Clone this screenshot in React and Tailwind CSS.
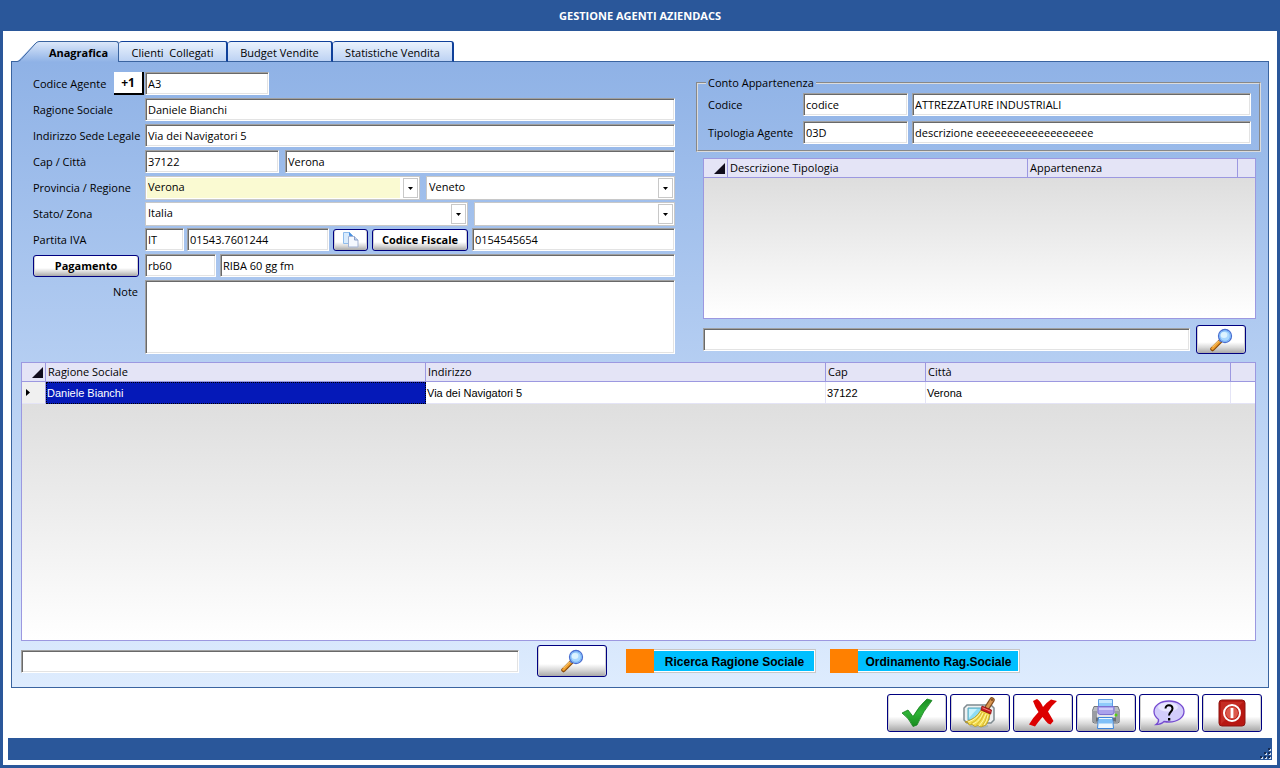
import { useState } from 'react';

function TextField({ className = '', ...props }) {
  return (
    <input
      type="text"
      className={`h-[23px] min-w-0 border border-t-[#a0a0a0] border-l-[#a0a0a0] border-r-white border-b-white bg-white px-0.5 shadow-[inset_1px_1px_0_#696969,inset_-1px_-1px_0_#e3e3e3] outline-none ${className}`}
      {...props}
    />
  );
}

function Combo({ className = '', tone = 'bg-white', options, ...props }) {
  return (
    <div className={`relative flex h-6 min-w-0 border border-[#c8c8c8] bg-white p-px ${className}`}>
      <select className={`mr-[18px] min-w-0 flex-1 appearance-none pb-0.5 pl-px leading-4 outline-none ${tone}`} {...props}>
        {options.map((o) => (
          <option key={o}>{o}</option>
        ))}
      </select>
      <span className="pointer-events-none absolute top-px right-px flex h-5 w-[15px] items-center justify-center border border-[#c8c8c8] bg-white">
        <svg width="5" height="3" viewBox="0 0 5 3" aria-hidden="true">
          <path d="M0 0h5L2.5 3z" fill="#000" />
        </svg>
      </span>
    </div>
  );
}

function PushButton({ className = '', children, ...props }) {
  return (
    <button
      type="button"
      className={`flex shrink-0 cursor-pointer items-center justify-center rounded-[3px] border border-[#000080] bg-linear-to-b from-white from-60% via-[#d8d8d8] via-80% to-[#a8a8a8] font-bold shadow-[inset_1px_0_0_#d0d0d0,inset_-1px_0_0_#d0d0d0] ${className}`}
      {...props}
    >
      {children}
    </button>
  );
}

function ToggleBar({ label }) {
  const [on, setOn] = useState(false);

  return (
    <button type="button" aria-pressed={on} onClick={() => setOn(!on)} className="flex h-6 w-[190px] cursor-pointer">
      <span className="h-full w-7 bg-[#ff8000]"></span>
      <span className="flex h-full flex-1 items-center justify-center border border-l-0 border-[#c8c8c8] bg-[#00bfff] pt-0.5 font-['Liberation_Sans',Arial,sans-serif] text-[12px] font-bold shadow-[inset_0_1px_0_#fff,inset_-1px_-1px_0_#fff]">
        {label}
      </span>
    </button>
  );
}

function MagnifierIcon() {
  return (
    <svg width="24" height="24" viewBox="0 0 24 24" aria-hidden="true">
      <path d="M11 13.500 3.500 21" stroke="#8a4b08" strokeWidth="4.500" strokeLinecap="round" />
      <path d="M10.500 13.500 3.500 20.500" stroke="#f0a030" strokeWidth="2.800" strokeLinecap="round" />
      <path d="M9.500 13 3.500 19" stroke="#ffdc90" strokeWidth="1" />
      <path d="m10.500 13.500 2.500-2.500" stroke="#7888b0" strokeWidth="2.500" />
      <circle cx="16" cy="8" r="6.5" fill="#a9d8ff" stroke="#4a6ed0" strokeWidth="1.300" />
      <circle cx="16" cy="8" r="5.3" fill="none" stroke="#78b4f8" />
      <ellipse cx="15" cy="7" rx="3.4" ry="3" fill="#dcf3ff" />
    </svg>
  );
}

function CopyIcon() {
  return (
    <svg width="17" height="17" viewBox="0 0 17 17" aria-hidden="true">
      <path d="M1.500 1.500h6l3 3v8h-9z" fill="#d8ebfd" stroke="#8fbcec" />
      <path d="M7.500 1.500v3h3" fill="#4b91e0" stroke="#4b91e0" />
      <path d="M6.500 5.500h6l3.500 3.500v7h-9.500z" fill="#f4f8fe" stroke="#a3b3d4" />
      <path d="M12.500 5.500v3.500h3.500" fill="#c0d4f0" stroke="#8b9fc8" />
    </svg>
  );
}

function CheckIcon() {
  return (
    <svg width="32" height="30" viewBox="0 0 32 30" aria-hidden="true">
      <defs>
        <linearGradient id="check" x1="0" y1="0" x2="0" y2="1">
          <stop offset="0" stopColor="#1c8f24" />
          <stop offset="0.5" stopColor="#2fb336" />
          <stop offset="1" stopColor="#178a1e" />
        </linearGradient>
      </defs>
      <path d="m1 15 6-3 5 6.500Q18 8 26 1l5 1.500Q22 13 16 27l-4 1.500Q8 20 1 15z" fill="url(#check)" stroke="#13801a" strokeWidth=".8" />
    </svg>
  );
}

function BroomIcon() {
  return (
    <svg width="34" height="32" viewBox="0 0 34 32" aria-hidden="true">
      <path d="M4 8h24l3 3v12l-3 3H4l-3-3V11z" fill="#eef1f2" stroke="#7e8a90" strokeWidth="1.500" />
      <path d="M5 11h21v12H5z" fill="#8edcf4" stroke="#58a4b8" />
      <path d="m6 21 8-9H6z" fill="#c8f2fc" />
      <path d="M7 29q9 2.500 18 0" fill="none" stroke="#a9b4b8" strokeWidth="2" />
      <path d="m24.500 10 4.500-7" stroke="#855022" strokeWidth="5.500" strokeLinecap="round" />
      <path d="m24.500 10 4.500-7" stroke="#d99650" strokeWidth="3.200" strokeLinecap="round" />
      <circle cx="29" cy="2.800" r="1.200" fill="#8a5424" />
      <path d="m18 13 9 4q-1 7-4 11l-5 2-3-1.500-3 1-3-2-3 .5-1-2.500-3-.5Q13 22 18 13z" fill="#f3dc48" stroke="#b5921c" strokeWidth=".8" />
      <path d="M18 15q-4 7-13 10M20 16q-3 8-10 11M23 17q-3 8-7 12M25 18q-1 6-4 10" fill="none" stroke="#fff6ac" />
      <path d="M19 15q-4 8-11 11.500M21.500 16q-3 8-8 12M24 18q-1 6-5 11" fill="none" stroke="#c9a62a" strokeWidth=".7" />
      <path d="m19 9 9.500 4-.8 4L18 13z" fill="#c81c1c" stroke="#8d1010" strokeWidth=".8" />
      <path d="m19.500 10.800 8 3.400" stroke="#f08080" />
    </svg>
  );
}

function CrossIcon() {
  return (
    <svg width="30" height="30" viewBox="0 0 30 30" aria-hidden="true">
      <path d="m5 3 4-2q3.500 2 6 8 3.500-4.500 8-7.500l6 1.500q-5.500 4.500-9 10.500l5.500 9.500-3 3.500-2.500-1q-2.500-2.500-5.500-6.500-4 4.500-7.500 9.500L1 26.500q4-7 9.500-12.500Q7 9 5 3z" fill="#dc0000" />
    </svg>
  );
}

function PrinterIcon() {
  return (
    <svg width="30" height="32" viewBox="0 0 30 32" aria-hidden="true">
      <path d="M3 9.500h24l1.500 4V25l-2 1h-23l-2-1V13.500z" fill="#b9bcc0" stroke="#75787c" />
      <path d="M1 14h5v11H1zM24 14h5v11h-5z" fill="#9a9da2" />
      <path d="M6 16h18v6H6z" fill="#e3e5e8" />
      <path d="M7.500 2.500h14v9h-14z" fill="#c6e6ff" stroke="#5b9be4" />
      <path d="M8 6h13v3H8z" fill="#8fcbfb" />
      <path d="M7 9.500h16v7l-2 1H9l-2-1z" fill="#aaa2ec" stroke="#7c70d0" />
      <path d="M8 12h14" stroke="#dcd8ff" strokeWidth="1.500" />
      <path d="M5 20.500h20v4H5z" fill="#6b6e73" />
      <path d="M7.500 20.500h14l1 11h-16z" fill="#eef8ff" stroke="#3f86dc" />
      <path d="M8 22h13l.5 4.500h-14z" fill="#7fc0f8" />
      <circle cx="25" cy="18" r="1.500" fill="#54d010" />
    </svg>
  );
}

function HelpIcon() {
  return (
    <svg width="32" height="28" viewBox="0 0 32 28" aria-hidden="true">
      <path d="M16 2c8.500 0 15 4.500 15 10.500S24.500 23 16 23q-3 0-5-.5-3 3-8 3 3-2 2.500-5Q1 17 1 12.500C1 6.500 7.500 2 16 2z" fill="#d2ccfb" stroke="#754bd0" strokeWidth="1.300" />
      <ellipse cx="15" cy="8" rx="10" ry="4.500" fill="#e8e5ff" />
      <path d="M12.500 9.500C12.500 5 19.500 5.500 19.500 9.500c0 3-3.500 3.500-3.500 7" fill="none" stroke="#000" strokeWidth="2" />
      <path d="M15 19h2.300v2.500H15z" fill="#000" />
    </svg>
  );
}

function PowerIcon() {
  return (
    <svg width="28" height="28" viewBox="0 0 28 28" aria-hidden="true">
      <rect x="1" y="1" width="26" height="26" rx="3" fill="#b81812" stroke="#8d1410" />
      <path d="M3 3h22L3 25z" fill="#c42c24" />
      <circle cx="14" cy="14" r="6" fill="#dc5a4c" />
      <circle cx="14" cy="14" r="8" fill="none" stroke="#fff" strokeWidth="2" />
      <path d="M14 9v10" stroke="#fff" strokeWidth="2.800" />
    </svg>
  );
}

function CornerMark() {
  return (
    <svg width="11" height="11" viewBox="0 0 11 11" className="ml-auto" aria-hidden="true">
      <path d="M11 0v11H0z" fill="#100c1c" />
    </svg>
  );
}

function SizeGrip() {
  const dots = [[8, 0], [4, 4], [8, 4], [0, 8], [4, 8], [8, 8]];
  return (
    <svg width="12" height="12" viewBox="0 0 12 12" aria-hidden="true">
      {dots.map(([x, y]) => (
        <g key={`${x}-${y}`}>
          <rect x={x + 1} y={y + 1} width="2" height="2" fill="#d4dcea" />
          <rect x={x} y={y} width="2" height="2" fill="#152c55" />
        </g>
      ))}
    </svg>
  );
}

const tabs = ['Clienti\u00a0 Collegati', 'Budget Vendite', 'Statistiche Vendita'];
const tabWidths = ['w-[109px]', 'w-[105px]', 'w-[121px]'];

const actions = [
  { name: 'Conferma', Icon: CheckIcon },
  { name: 'Pulisci', Icon: BroomIcon },
  { name: 'Elimina', Icon: CrossIcon },
  { name: 'Stampa', Icon: PrinterIcon },
  { name: 'Aiuto', Icon: HelpIcon },
  { name: 'Esci', Icon: PowerIcon },
];

const headCell = 'h-[19px] border-r border-b border-[#9c98e0] px-0.5 text-left font-normal';
const bodyCell = 'h-[22px] border-r border-b border-[#e4e4f6] px-px';

export default function App() {
  return (
    <div className="flex min-h-screen flex-col border-x-[3px] border-b-[3px] border-[#2a579a] bg-white font-['Open_Sans','Noto_Sans',sans-serif] text-[11px] leading-4 text-black">
      <header className="flex h-[31px] shrink-0 items-center justify-center bg-[#2a579a]">
        <h1 className="font-bold text-white">GESTIONE AGENTI AZIENDACS</h1>
      </header>

      <main className="flex flex-1 flex-col px-2 pt-2.5">
        {/* Tabs */}
        <div role="tablist" className="z-10 -mb-px flex h-[21px] shrink-0 pl-1.5">
          <svg width="22" height="21" viewBox="0 0 22 21" className="shrink-0" aria-hidden="true">
            <defs>
              <linearGradient id="tab" x1="0" y1="0" x2="0" y2="1">
                <stop offset="0" stopColor="#dce8fa" />
                <stop offset="1" stopColor="#8fb2e6" />
              </linearGradient>
            </defs>
            <path d="M0 21 18 2q2-1.500 4-1.500V21z" fill="url(#tab)" />
            <path d="M0 20.500q2 0 4-2L18 3q2-2.500 4-2.500" fill="none" stroke="#3a64a0" />
          </svg>
          <button
            type="button"
            role="tab"
            aria-selected="true"
            className="w-20 cursor-pointer rounded-tr-[3px] border-t border-r border-[#3a64a0] bg-linear-to-b from-[#dce8fa] to-[#8fb2e6] pt-0.5 font-bold"
          >
            Anagrafica
          </button>
          {tabs.map((tab, i) => (
            <button
              key={tab}
              type="button"
              role="tab"
              aria-selected="false"
              className={`${tabWidths[i]} cursor-pointer rounded-t-[3px] border-t border-r-2 border-b border-[#10409a] border-b-[#3a64a0] bg-linear-to-b from-[#eaf2fd] to-[#bdd2f3] pt-0.5 whitespace-nowrap`}
            >
              {tab}
            </button>
          ))}
        </div>

        {/* Anagrafica */}
        <section className="flex flex-1 flex-col border border-[#3a64a0] bg-linear-to-b from-[#8fb2e6] to-[#deecfe] pt-2.5 pb-2.5 pl-[9px]">
          <div className="grid grid-cols-[minmax(0,642fr)_minmax(0,565fr)] gap-[21px] pr-[7px] pl-3">
            <form className="flex flex-col gap-[3px]" onSubmit={(e) => e.preventDefault()}>
              <div className="flex h-[23px] items-center">
                <div className="flex w-28 shrink-0 items-center justify-between pr-px">
                  <label htmlFor="codice">Codice Agente</label>
                  <button type="button" className="h-[23px] w-[30px] cursor-pointer border-r-2 border-b-2 border-black bg-white text-[12px] font-bold">
                    +1
                  </button>
                </div>
                <TextField id="codice" defaultValue="A3" className="w-[124px]" />
              </div>
              <div className="flex items-center">
                <label htmlFor="ragione" className="w-28 shrink-0">Ragione Sociale</label>
                <TextField id="ragione" defaultValue="Daniele Bianchi" className="flex-1" />
              </div>
              <div className="flex items-center">
                <label htmlFor="sede" className="w-28 shrink-0 whitespace-nowrap">Indirizzo Sede Legale</label>
                <TextField id="sede" defaultValue="Via dei Navigatori 5" className="flex-1" />
              </div>
              <div className="flex items-center">
                <label htmlFor="cap" className="w-28 shrink-0">Cap / Città</label>
                <TextField id="cap" defaultValue="37122" className="mr-1.5 w-[134px]" />
                <TextField aria-label="Città" defaultValue="Verona" className="flex-1" />
              </div>
              <div className="flex h-[23px] items-start">
                <label htmlFor="provincia" className="w-28 shrink-0 pt-1 whitespace-nowrap">Provincia / Regione</label>
                <Combo id="provincia" options={['Verona']} tone="bg-[#fafad2]" className="mr-1.5 w-[275px]" />
                <Combo aria-label="Regione" options={['Veneto']} className="flex-1" />
              </div>
              <div className="flex h-[23px] items-start">
                <label htmlFor="stato" className="w-28 shrink-0 pt-1">Stato/ Zona</label>
                <Combo id="stato" options={['Italia']} className="mr-1.5 w-[323px]" />
                <Combo aria-label="Zona" options={['']} className="flex-1" />
              </div>
              <div className="flex items-center">
                <label htmlFor="iva" className="w-28 shrink-0">Partita IVA</label>
                <TextField aria-label="Nazione" defaultValue="IT" className="mr-[3px] w-[39px]" />
                <TextField id="iva" defaultValue="01543.7601244" className="mr-1 w-[142px]" />
                <PushButton aria-label="Copia" className="mr-1 h-[22px] w-[35px]">
                  <CopyIcon />
                </PushButton>
                <PushButton className="mr-1 h-[22px] w-24 whitespace-nowrap">Codice Fiscale</PushButton>
                <TextField aria-label="Codice Fiscale" defaultValue="0154545654" className="flex-1" />
              </div>
              <div className="flex items-center">
                <PushButton className="mr-1.5 h-[22px] w-[106px]">Pagamento</PushButton>
                <TextField aria-label="Pagamento" defaultValue="rb60" className="mr-1 w-[71px]" />
                <TextField aria-label="Descrizione pagamento" defaultValue="RIBA 60 gg fm" className="flex-1" />
              </div>
              <div className="flex">
                <label htmlFor="note" className="w-28 shrink-0 pt-1 pr-[7px] text-right">Note</label>
                <textarea
                  id="note"
                  className="h-[74px] min-w-0 flex-1 resize-none border border-t-[#a0a0a0] border-r-white border-b-white border-l-[#a0a0a0] bg-white p-0.5 shadow-[inset_1px_1px_0_#696969,inset_-1px_-1px_0_#e3e3e3] outline-none"
                ></textarea>
              </div>
            </form>

            <div className="flex flex-col gap-1.5 pt-[3px]">
              <fieldset className="min-w-0 border-2 border-[#dcdcdc] px-2 pt-0.5 pb-1.5 [border-style:groove]">
                <legend className="px-0.5">Conto Appartenenza</legend>
                <div className="flex flex-col gap-[5px]">
                  <div className="flex items-center">
                    <label htmlFor="conto" className="w-[97px] shrink-0 pl-0.5">Codice</label>
                    <TextField id="conto" defaultValue="codice" className="mr-1 w-[105px]" />
                    <TextField aria-label="Descrizione conto" defaultValue="ATTREZZATURE INDUSTRIALI" className="flex-1" />
                  </div>
                  <div className="flex items-center">
                    <label htmlFor="tipologia" className="w-[97px] shrink-0 pl-0.5 whitespace-nowrap">Tipologia Agente</label>
                    <TextField id="tipologia" defaultValue="03D" className="mr-1 w-[105px]" />
                    <TextField aria-label="Descrizione tipologia" defaultValue="descrizione eeeeeeeeeeeeeeeeeee" className="flex-1" />
                  </div>
                </div>
              </fieldset>

              <div className="mr-[5px] ml-[7px] flex-1 border border-[#9c98e0] bg-linear-to-b from-[#d9d9d9] to-white">
                <table className="w-full table-fixed border-separate border-spacing-0">
                  <thead className="bg-[#e4e4f6]">
                    <tr>
                      <th className={`${headCell} w-6`}><CornerMark /></th>
                      <th className={`${headCell} w-[300px]`}>Descrizione Tipologia</th>
                      <th className={headCell}>Appartenenza</th>
                      <th className="w-[17px] border-b border-[#9c98e0]"></th>
                    </tr>
                  </thead>
                </table>
              </div>

              <div className="mr-[15px] ml-[7px] flex h-[29px] items-center gap-1.5">
                <TextField aria-label="Cerca tipologia" className="flex-1" />
                <PushButton aria-label="Cerca" className="h-[29px] w-[50px]">
                  <MagnifierIcon />
                </PushButton>
              </div>
            </div>
          </div>

          <div className="mt-2 mr-3 min-h-[279px] flex-1 border border-[#9c98e0] bg-linear-to-b from-[#d9d9d9] to-white">
            <table className="w-full table-fixed border-separate border-spacing-0">
              <thead className="bg-[#e4e4f6]">
                <tr>
                  <th className={`${headCell} w-6`}><CornerMark /></th>
                  <th className={`${headCell} w-[380px]`}>Ragione Sociale</th>
                  <th className={`${headCell} w-[400px]`}>Indirizzo</th>
                  <th className={`${headCell} w-[100px]`}>Cap</th>
                  <th className={headCell}>Città</th>
                  <th className="w-6 border-b border-[#9c98e0]"></th>
                </tr>
              </thead>
              <tbody className="bg-white font-['Liberation_Sans',Arial,sans-serif]">
                <tr>
                  <td className="border-r border-b border-[#9c98e0] border-b-[#e4e4f6] bg-[#f0f0f0] pl-1">
                    <svg width="4" height="7" viewBox="0 0 4 7" aria-hidden="true">
                      <path d="M0 0v7l4-3.500z" fill="#000" />
                    </svg>
                  </td>
                  <td className="h-[22px] border border-dotted border-black bg-[#0519b8] text-white">Daniele Bianchi</td>
                  <td className={bodyCell}>Via dei Navigatori 5</td>
                  <td className={bodyCell}>37122</td>
                  <td className={bodyCell}>Verona</td>
                  <td className="border-b border-[#e4e4f6]"></td>
                </tr>
              </tbody>
            </table>
          </div>

          <div className="mt-1 flex h-8 shrink-0 items-center">
            <TextField aria-label="Cerca agente" className="mr-[18px] w-[498px]" />
            <PushButton aria-label="Cerca" className="mr-[19px] h-8 w-[70px]">
              <MagnifierIcon />
            </PushButton>
            <div className="flex gap-3.5">
              <ToggleBar label="Ricerca Ragione Sociale" />
              <ToggleBar label="Ordinamento Rag.Sociale" />
            </div>
          </div>
        </section>

        <div className="flex justify-end gap-[3px] py-1.5 pr-[7px]">
          {actions.map(({ name, Icon }) => (
            <PushButton key={name} aria-label={name} title={name} className="h-[38px] w-[60px]">
              <Icon />
            </PushButton>
          ))}
        </div>
      </main>

      <footer className="mx-[5px] mb-[5px] flex h-[22px] shrink-0 items-end justify-end bg-[#2a579a]">
        <SizeGrip />
      </footer>
    </div>
  );
}
